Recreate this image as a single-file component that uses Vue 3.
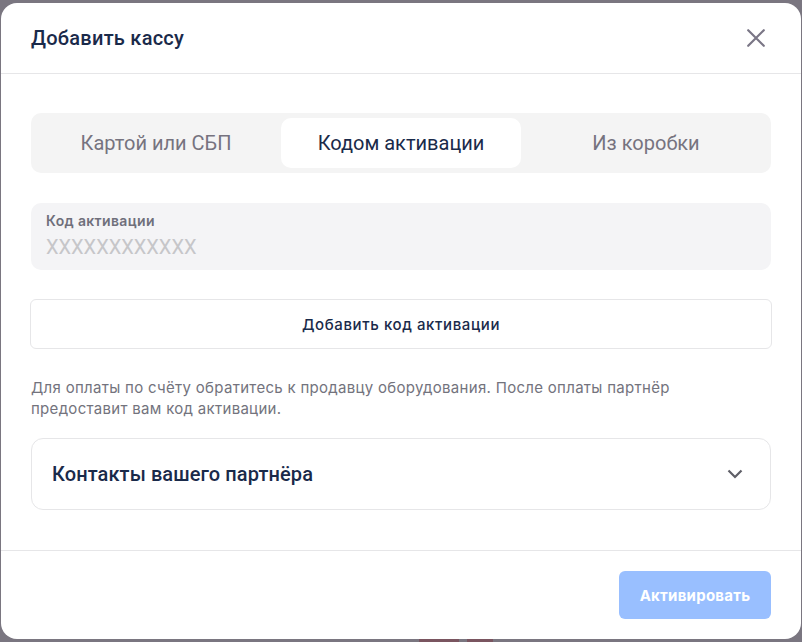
<script setup>
const tabs = [
  { label: 'Картой или СБП', active: false },
  { label: 'Кодом активации', active: true },
  { label: 'Из коробки', active: false },
]
</script>

<template>
  <div class="backdrop">
    <span class="peek peek-a"></span>
    <span class="peek peek-b"></span>
    <div class="modal">
      <header class="head">
        <h1 class="title">Добавить кассу</h1>
        <svg class="close" width="24" height="24" viewBox="0 0 24 24" fill="none">
          <path d="M4.2 4.2L19.8 19.8M19.8 4.2L4.2 19.8" stroke="#7a7686" stroke-width="2.2" stroke-linecap="round" />
        </svg>
      </header>
      <main class="body">
        <div class="tabs">
          <div v-for="t in tabs" :key="t.label" class="tab" :class="{ active: t.active }">{{ t.label }}</div>
        </div>
        <div class="field">
          <div class="field-label">Код активации</div>
          <div class="field-ph">XXXXXXXXXXXX</div>
        </div>
        <div class="add-btn">Добавить код активации</div>
        <p class="note">Для оплаты по счёту обратитесь к продавцу оборудования. После оплаты партнёр предоставит вам код активации.</p>
        <div class="contacts">
          <span>Контакты вашего партнёра</span>
          <svg width="16" height="10" viewBox="0 0 16 10" fill="none">
            <path d="M1.5 1.5L8 8L14.5 1.5" stroke="#5f5f67" stroke-width="2.2" />
          </svg>
        </div>
      </main>
      <footer class="foot">
        <div class="submit">Активировать</div>
      </footer>
    </div>
  </div>
</template>

<style>
html, body { margin: 0; background: #7a7680; overflow: hidden; }
</style>

<style scoped>
.backdrop {
  position: relative;
  width: 802px;
  height: 642px;
  box-sizing: border-box;
  padding: 3px 1px;
  background: #7a7680;
  font-family: Roboto, "Liberation Sans", sans-serif;
}
.peek {
  position: absolute;
  bottom: 0;
  height: 3px;
  background: #7a5560;
}
.peek-a { left: 419px; width: 40px; }
.peek-b { left: 467px; width: 26px; }
.modal {
  position: relative;
  height: 636px;
  background: #fff;
  border-radius: 16px;
  display: flex;
  flex-direction: column;
  overflow: hidden;
}
.head {
  height: 71px;
  box-sizing: border-box;
  flex: none;
  border-bottom: 1px solid #e6e6e8;
  display: flex;
  align-items: center;
  justify-content: space-between;
  padding: 0 33px 0 30px;
}
.title {
  margin: 0;
  font-size: 20px;
  font-weight: 500;
  color: #1a2a4a;
  letter-spacing: 0.25px;
}
.body {
  flex: 1;
  padding: 39px 30px 0;
  display: flex;
  flex-direction: column;
}
.tabs {
  height: 60px;
  box-sizing: border-box;
  padding: 5px;
  background: #f4f4f4;
  border-radius: 10px;
  display: grid;
  grid-template-columns: repeat(3, 1fr);
  gap: 5px;
}
.tab {
  display: flex;
  align-items: center;
  justify-content: center;
  font-size: 20px;
  color: #76737f;
  border-radius: 10px;
}
.tab.active { background: #fff; color: #1a2a4a; }
.field {
  margin-top: 30px;
  height: 67px;
  box-sizing: border-box;
  padding: 9px 15px 0;
  background: #f4f4f6;
  border-radius: 10px;
}
.field-label {
  font-family: Inter, sans-serif;
  font-size: 14px;
  font-weight: 600;
  line-height: 18px;
  letter-spacing: 0.35px;
  color: #6f6f7b;
}
.field-ph {
  margin-top: 4px;
  font-size: 20px;
  line-height: 26px;
  color: #c6c6c9;
}
.add-btn {
  margin: 29px -1px 0;
  height: 50px;
  box-sizing: border-box;
  border: 1px solid #e6e6e8;
  border-radius: 6px;
  display: flex;
  align-items: center;
  justify-content: center;
  font-family: Inter, sans-serif;
  font-size: 15px;
  font-weight: 500;
  letter-spacing: 0.6px;
  color: #1a2a4a;
}
.note {
  margin: 28px 0 0;
  font-family: Inter, sans-serif;
  font-size: 15px;
  line-height: 21px;
  letter-spacing: 0.3px;
  color: #73737d;
}
.contacts {
  margin-top: 19px;
  height: 72px;
  box-sizing: border-box;
  border: 1px solid #e6e6e8;
  border-radius: 12px;
  padding: 0 27px 0 20px;
  display: flex;
  align-items: center;
  justify-content: space-between;
  font-size: 20px;
  font-weight: 500;
  letter-spacing: 0.1px;
  color: #1a2a4a;
}
.foot {
  flex: none;
  height: 89px;
  box-sizing: border-box;
  border-top: 1px solid #e6e6e8;
  padding: 20px 30px 0;
  display: flex;
  justify-content: flex-end;
}
.submit {
  width: 152px;
  height: 48px;
  border-radius: 6px;
  background: #99bfff;
  color: #fff;
  font-family: Inter, sans-serif;
  font-size: 15px;
  font-weight: 700;
  letter-spacing: 0.25px;
  display: flex;
  align-items: center;
  justify-content: center;
}
</style>
